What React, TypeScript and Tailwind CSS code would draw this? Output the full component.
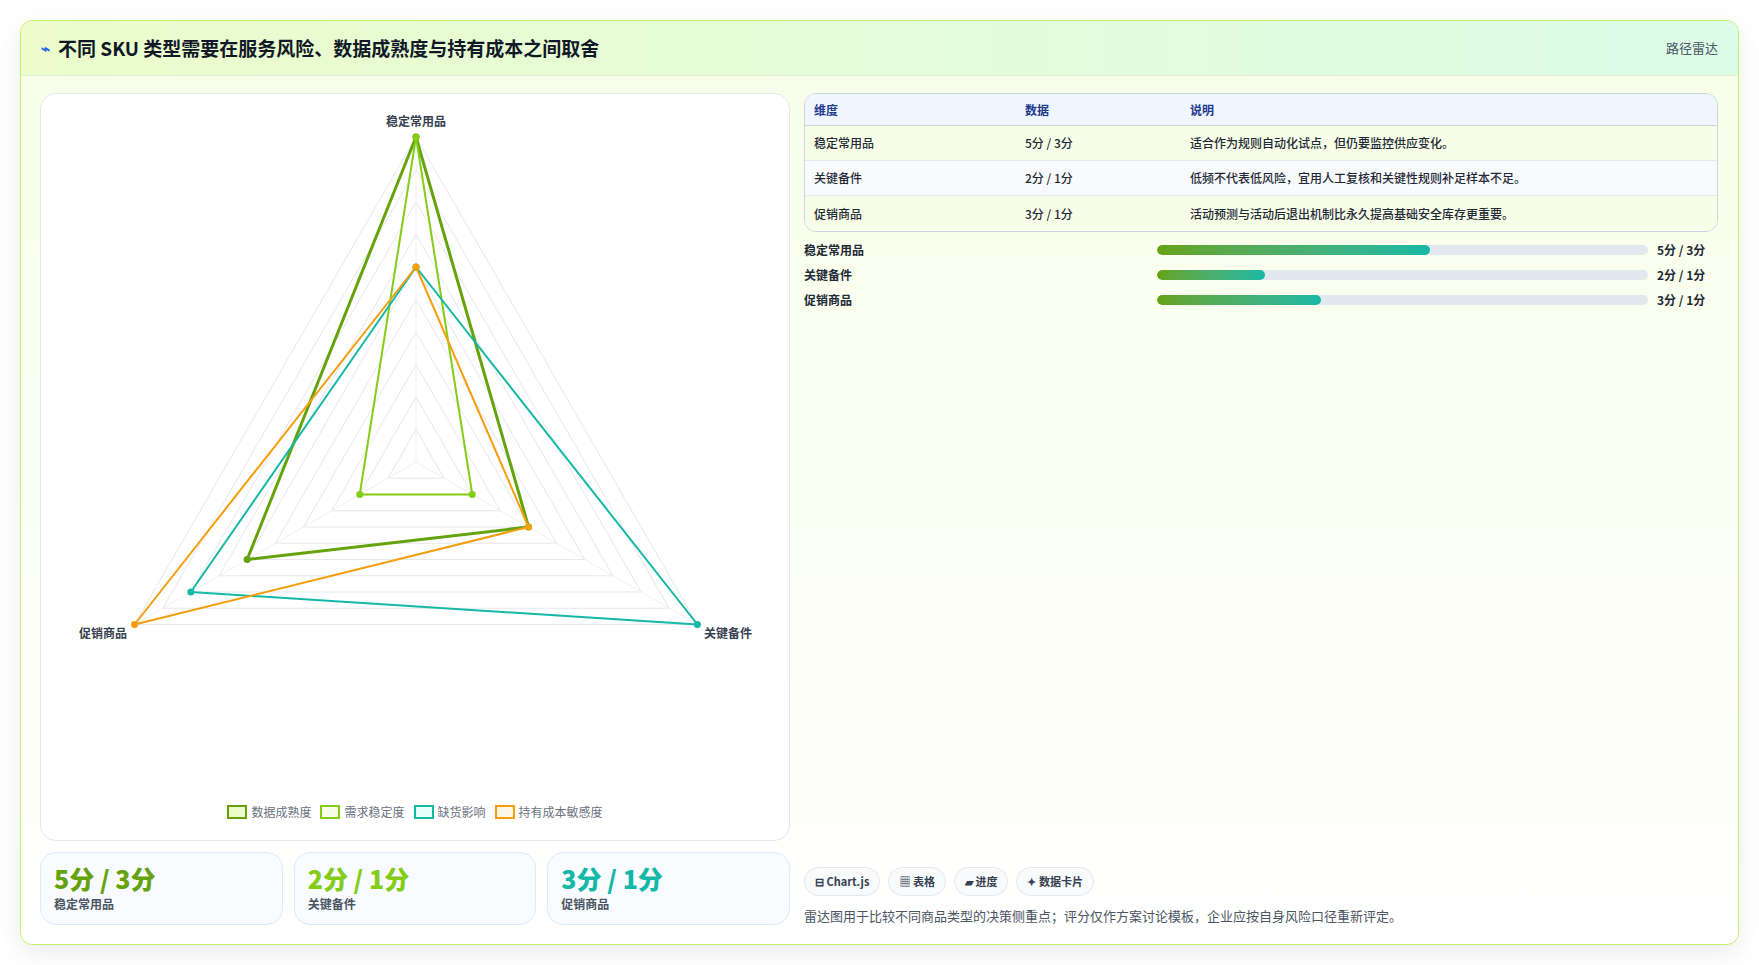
import React from "react";

const font = { fontFamily: '"Noto Sans CJK SC", "Noto Sans", sans-serif' };

const CX = 375;
const CY = 368;
const R = 325;
// axes clockwise from top: 稳定常用品, 关键备件, 促销商品
const angles = [-90, 30, 150].map((a) => (a * Math.PI) / 180);

function pt(i: number, v: number): [number, number] {
  return [CX + Math.cos(angles[i]) * R * v, CY + Math.sin(angles[i]) * R * v];
}

function poly(vals: number[]) {
  return vals.map((v, i) => pt(i, v).join(",")).join(" ");
}

const series = [
  { name: "数据成熟度", color: "#65a30d", fill: "#ecfccb", vals: [5, 2, 3], w: 3 },
  { name: "需求稳定度", color: "#84cc16", fill: "#f7fee7", vals: [5, 1, 1], w: 2 },
  { name: "缺货影响", color: "#14b8a6", fill: "#e6fffa", vals: [3, 5, 4], w: 2 },
  { name: "持有成本敏感度", color: "#f59e0b", fill: "#fff7e6", vals: [3, 2, 5], w: 2 },
];

const rows = [
  { k: "稳定常用品", v: "5分 / 3分", d: "适合作为规则自动化试点，但仍要监控供应变化。", pct: 55.7, bg: "bg-[#f7fee7]" },
  { k: "关键备件", v: "2分 / 1分", d: "低频不代表低风险，宜用人工复核和关键性规则补足样本不足。", pct: 22, bg: "bg-[#f8fafc]" },
  { k: "促销商品", v: "3分 / 1分", d: "活动预测与活动后退出机制比永久提高基础安全库存更重要。", pct: 33.3, bg: "bg-[#f7fee7]" },
];

const RadarChart = () => (
  <svg width="750" height="690" className="block">
    {Array.from({ length: 10 }, (_, k) => (
      <polygon
        key={k}
        points={poly([1, 1, 1].map(() => (k + 1) / 10))}
        fill="none"
        stroke="#e5e7eb"
        strokeWidth="1"
      />
    ))}
    {[0, 1, 2].map((i) => {
      const [x, y] = pt(i, 1);
      return <line key={i} x1={CX} y1={CY} x2={x} y2={y} stroke="#eceff3" />;
    })}
    {series.map((s) => (
      <g key={s.name}>
        <polygon
          points={poly(s.vals.map((v) => v / 5))}
          fill="none"
          stroke={s.color}
          strokeWidth={s.w}
          strokeLinejoin="round"
        />
        {s.vals.map((v, i) => {
          const [x, y] = pt(i, v / 5);
          return <circle key={i} cx={x} cy={y} r="3.5" fill={s.color} />;
        })}
      </g>
    ))}
    <text x={CX} y={32} textAnchor="middle" fontSize="12" fontWeight="600" fill="#374151" style={font}>稳定常用品</text>
    <text x={687} y={544} textAnchor="middle" fontSize="12" fontWeight="600" fill="#374151" style={font}>关键备件</text>
    <text x={62} y={544} textAnchor="middle" fontSize="12" fontWeight="600" fill="#374151" style={font}>促销商品</text>
  </svg>
);

export default function App() {
  return (
    <div className="min-h-screen bg-white pt-5 px-5" style={font}>
      <div className="w-[1719px] h-[925px] rounded-xl border border-[#bef264] shadow-[0_8px_24px_rgba(0,0,0,0.08)] overflow-hidden bg-gradient-to-b from-[#f7fee7] to-white flex flex-col">
        <div className="h-[55px] shrink-0 flex items-center justify-between px-5 bg-gradient-to-r from-[#ecfccb] to-[#dcfce7] border-b border-[#e2ecd6]">
          <div className="flex items-center gap-2">
            <span className="text-[#2563eb] text-[15px] font-bold">⌁</span>
            <h1 className="text-[19px] font-bold text-[#111827]">不同 SKU 类型需要在服务风险、数据成熟度与持有成本之间取舍</h1>
          </div>
          <span className="text-[13px] text-[#4b5563]">路径雷达</span>
        </div>

        <div className="flex-1 flex gap-[14px] px-[19px] pt-[17px]">
          <div className="w-[750px] flex flex-col">
            <div className="h-[748px] rounded-2xl border border-[#e5e7eb] bg-white flex flex-col">
              <RadarChart />
              <div className="flex items-center justify-center gap-[9px] mt-[19px] text-[12px] text-[#6b7280]">
                {series.map((s) => (
                  <div key={s.name} className="flex items-center gap-1">
                    <span className="w-[20px] h-[14px] border-2" style={{ borderColor: s.color, background: s.fill }} />
                    <span>{s.name}</span>
                  </div>
                ))}
              </div>
            </div>
            <div className="grid grid-cols-3 gap-[11px] mt-[11px]">
              {[
                { v: "5分 / 3分", l: "稳定常用品", c: "text-[#65a30d]" },
                { v: "2分 / 1分", l: "关键备件", c: "text-[#84cc16]" },
                { v: "3分 / 1分", l: "促销商品", c: "text-[#14b8a6]" },
              ].map((s) => (
                <div key={s.l} className="h-[73px] rounded-2xl border border-[#dbeafe] bg-[#f8fbff] px-[13px] pt-[10px]">
                  <div className={`text-[25px] font-extrabold leading-[30px] ${s.c}`}>{s.v}</div>
                  <div className="text-[12px] text-[#4b5563] font-semibold mt-0.5">{s.l}</div>
                </div>
              ))}
            </div>
          </div>

          <div className="flex-1 flex flex-col pr-[1px]">
            <div className="rounded-xl border border-[#cbd5e1] overflow-hidden text-[12px]">
              <div className="flex h-[32px] items-center bg-[#eff6ff] border-b border-[#cbd5e1] text-[#1e3a8a] font-semibold">
                <div className="w-[220px] pl-[9px]">维度</div>
                <div className="w-[165px]">数据</div>
                <div>说明</div>
              </div>
              {rows.map((r, i) => (
                <div key={r.k} className={`flex h-[35px] items-center text-[#1f2937] font-medium ${r.bg} ${i < 2 ? "border-b border-[#e2e8f0]" : ""}`}>
                  <div className="w-[220px] pl-[9px]">{r.k}</div>
                  <div className="w-[165px]">{r.v}</div>
                  <div>{r.d}</div>
                </div>
              ))}
            </div>
            <div className="flex flex-col gap-[9px] mt-[10px] text-[12px] font-semibold text-[#1f2937]">
              {rows.map((r) => (
                <div key={r.k} className="flex items-center h-[16px]">
                  <div className="w-[353px]">{r.k}</div>
                  <div className="w-[491px] h-[10px] rounded-full bg-[#e2e8f0] overflow-hidden">
                    <div className="h-full rounded-full bg-gradient-to-r from-[#65a30d] to-[#14b8a6]" style={{ width: `${r.pct}%` }} />
                  </div>
                  <div className="ml-[9px]">{r.v}</div>
                </div>
              ))}
            </div>
            <div className="flex-1" />
            <div className="flex gap-[8px] text-[11px] font-semibold text-[#374151]">
              {["⊟ Chart.js", "▦ 表格", "▰ 进度", "✦ 数据卡片"].map((c) => (
                <span key={c} className="h-[29px] px-[10px] flex items-center rounded-full border border-[#e5e7eb] bg-[#f8fafc]">{c}</span>
              ))}
            </div>
            <p className="text-[13px] text-[#4b5563] mt-[10px] mb-[19px]">雷达图用于比较不同商品类型的决策侧重点；评分仅作方案讨论模板，企业应按自身风险口径重新评定。</p>
          </div>
        </div>
      </div>
    </div>
  );
}
